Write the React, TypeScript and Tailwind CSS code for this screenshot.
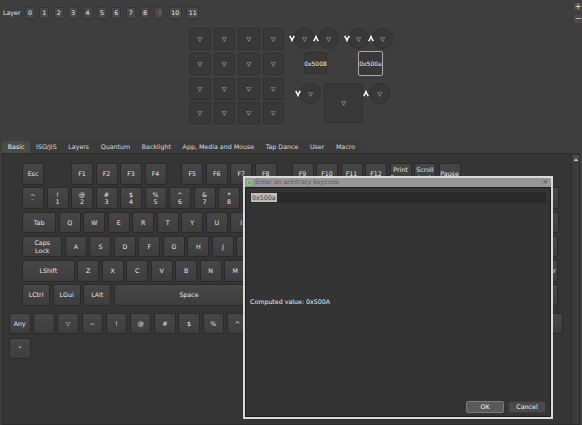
import React from "react";

function Tri() {
  return <span className="text-[6px] leading-none text-[#d4d4d4]">▽</span>;
}

function DownArrow({ className }: { className: string }) {
  return (
    <svg className={className} width="6" height="7" viewBox="0 0 6 7">
      <path d="M0.7 0.8 L3 5 L5.3 0.8" stroke="#ffffff" strokeWidth="1.5" fill="none" />
      <path d="M3 4.6 V6.6" stroke="#ffffff" strokeWidth="1.1" />
    </svg>
  );
}

function UpArrow({ className }: { className: string }) {
  return (
    <svg className={className} width="6" height="7" viewBox="0 0 6 7">
      <path d="M0.7 6.2 L3 2 L5.3 6.2" stroke="#ffffff" strokeWidth="1.5" fill="none" />
      <path d="M3 2.4 V0.4" stroke="#ffffff" strokeWidth="1.1" />
    </svg>
  );
}

function Circle({ className }: { className: string }) {
  return (
    <div className={`absolute w-[21px] h-[21px] rounded-full bg-[#383838] border border-[#303030] flex items-center justify-center ${className}`}>
      <Tri />
    </div>
  );
}

type KP = { w?: string; ml?: string; t?: string; b?: string; label?: string };

function Key({ w = "w-[22px]", ml = "", t, b, label }: KP) {
  return (
    <div
      className={`${w} ${ml} h-[21.5px] shrink-0 flex flex-col items-center justify-center rounded-[2px] border border-[#2a2a2a] bg-linear-to-b from-[#474747] to-[#3d3d3d] text-[#e6e6e6] leading-[7.5px] overflow-hidden`}
    >
      {t !== undefined ? (
        <>
          <span>{t}</span>
          <span>{b}</span>
        </>
      ) : (
        <span className="whitespace-pre-line text-center">{label}</span>
      )}
    </div>
  );
}

function SmallKey({ label }: { label: React.ReactNode }) {
  return (
    <div className="w-[21.5px] h-[21.5px] shrink-0 flex items-center justify-center rounded-[2px] border border-[#2a2a2a] bg-linear-to-b from-[#474747] to-[#3d3d3d] text-[#e6e6e6] leading-none">
      {label}
    </div>
  );
}

const tabs = ["Basic", "ISO/JIS", "Layers", "Quantum", "Backlight", "App, Media and Mouse", "Tap Dance", "User", "Macro"];

const row7: React.ReactNode[] = ["Any", "", <Tri key="t" />, "~", "!", "@", "#", "$", "%", "^", "&", "*", "(", ")", "_", "+", "{", "}", "<", ">", ":", "|", "?", '"'];

export default function App() {
  const layers = ["0", "1", "2", "3", "4", "5", "6", "7", "8", "9", "10", "11"];
  return (
    <div className="w-[582px] h-[425px] relative overflow-hidden bg-[#3e3e3e] text-[6.3px] text-[#e8e8e8] font-['DejaVu_Sans','Liberation_Sans',sans-serif] flex flex-col">
      {/* Top section */}
      <div className="h-[139px] shrink-0 relative">
        <div className="flex items-center pt-[7px] pl-[3px] gap-[4.4px]">
          <span>Layer</span>
          {layers.map((l) => (
            <div
              key={l}
              className={`h-[12px] min-w-[10px] px-[1.5px] flex items-center justify-center rounded-[1.5px] bg-[#484848] border border-[#353535] ${l === "9" ? "text-[#7a7a7a]" : "text-[#f0f0f0]"}`}
            >
              {l}
            </div>
          ))}
        </div>

        {/* zoom buttons */}
        <div className="absolute right-[0px] top-[3px] flex flex-col gap-[4px]">
          <div className="w-[8px] h-[8px] bg-[#4a4a4a] flex items-center justify-center text-[8px] leading-none text-[#e0e0e0]">+</div>
          <div className="w-[8px] h-[8px] bg-[#4a4a4a] flex items-center justify-center text-[8px] leading-none text-[#e0e0e0]">−</div>
        </div>

        {/* keyboard diagram */}
        <div className="absolute left-[189px] top-[28px] grid grid-cols-4 gap-x-[3px] gap-y-[2.8px]">
          {Array.from({ length: 16 }).map((_, i) => (
            <div key={i} className="w-[21.5px] h-[22px] rounded-[2px] bg-[#383838] border border-[#303030] flex items-center justify-center">
              <Tri />
            </div>
          ))}
        </div>

        <Circle className="left-[294px] top-[28px]" />
        <DownArrow className="absolute left-[289px] top-[35px]" />
        <Circle className="left-[318px] top-[28px]" />
        <UpArrow className="absolute left-[313px] top-[35px]" />
        <Circle className="left-[348px] top-[28px]" />
        <DownArrow className="absolute left-[344px] top-[35px]" />
        <Circle className="left-[372px] top-[28px]" />
        <UpArrow className="absolute left-[368px] top-[35px]" />

        <div className="absolute left-[304px] top-[52px] w-[23px] h-[22px] rounded-[2px] bg-[#383838] border border-[#303030] flex items-center justify-center text-[6px] text-[#f0f0f0]">
          0x5008
        </div>
        <div className="absolute left-[358px] top-[51px] w-[25px] h-[25px] rounded-[2px] bg-[#383838] border-[1.5px] border-[#a9a9a9] flex items-center justify-center text-[6px] text-[#f0f0f0]">
          0x500a
        </div>

        <Circle className="left-[300px] top-[83px]" />
        <DownArrow className="absolute left-[295px] top-[90px]" />
        <div className="absolute left-[324px] top-[83px] w-[39px] h-[40px] rounded-[2px] bg-[#383838] border border-[#303030] flex items-center justify-center">
          <Tri />
        </div>
        <Circle className="left-[369px] top-[83px]" />
        <UpArrow className="absolute left-[363px] top-[90px]" />
      </div>

      {/* Tabs */}
      <div className="flex-1 flex flex-col px-[2px] min-h-0">
        <div className="h-[14px] shrink-0 flex items-end">
          {tabs.map((t, i) => (
            <div
              key={t}
              className={`h-[12px] px-[5.8px] flex items-center rounded-t-[2px] ${i === 0 ? "bg-[#4a4a4a] text-[#f2f2f2]" : "bg-[#3b3b3b] text-[#dcdcdc]"}`}
            >
              {t}
            </div>
          ))}
        </div>
        <div className="flex-1 flex border border-[#2c2c2c] bg-[#353535] min-h-0">
          <div className="flex-1 flex flex-col pl-[6px] pt-[9px]">
            <div className="ml-[13px] flex flex-col gap-[2.8px]">
              <div className="flex gap-[2.5px]">
                <Key label="Esc" />
                <Key label="F1" ml="ml-[24.5px]" />
                <Key label="F2" />
                <Key label="F3" />
                <Key label="F4" />
                <Key label="F5" ml="ml-[12.25px]" />
                <Key label="F6" />
                <Key label="F7" />
                <Key label="F8" />
                <Key label="F9" ml="ml-[12.25px]" />
                <Key label="F10" />
                <Key label="F11" />
                <Key label="F12" />
                <Key label={"Print\nScreen"} />
                <Key label={"Scroll\nLock"} />
                <Key label="Pause" />
              </div>
              <div className="flex gap-[2.5px]">
                <Key t="~" b="`" />
                <Key t="!" b="1" />
                <Key t="@" b="2" />
                <Key t="#" b="3" />
                <Key t="$" b="4" />
                <Key t="%" b="5" />
                <Key t="^" b="6" />
                <Key t="&" b="7" />
                <Key t="*" b="8" />
                <Key t="(" b="9" />
                <Key t=")" b="0" />
                <Key t="_" b="-" />
                <Key t="+" b="=" />
                <Key label="Backspace" w="w-[46.5px]" />
                <Key label="Insert" />
                <Key label="Home" />
                <Key label={"Page\nUp"} />
                <Key label={"Num\nLock"} />
                <Key label="/" />
                <Key label="*" />
                <Key label="-" />
              </div>
              <div className="flex gap-[2.5px]">
                <Key label="Tab" w="w-[34.25px]" />
                {["Q", "W", "E", "R", "T", "Y", "U", "I", "O", "P"].map((k) => (
                  <Key key={k} label={k} />
                ))}
                <Key t="{" b="[" />
                <Key t="}" b="]" />
                <Key t="|" b="\" w="w-[34.25px]" />
                <Key label="Delete" />
                <Key label="End" />
                <Key label={"Page\nDown"} />
                <Key label="7" />
                <Key label="8" />
                <Key label="9" />
                <Key label="+" />
              </div>
              <div className="flex gap-[2.5px]">
                <Key label={"Caps\nLock"} w="w-[40.4px]" />
                {["A", "S", "D", "F", "G", "H", "J", "K", "L"].map((k) => (
                  <Key key={k} label={k} />
                ))}
                <Key t=":" b=";" />
                <Key t={'"'} b="'" />
                <Key label="Enter" w="w-[52.6px]" />
                <Key label="4" ml="ml-[73.5px]" />
                <Key label="5" />
                <Key label="6" />
                <Key label="" />
              </div>
              <div className="flex gap-[2.5px]">
                <Key label="LShift" w="w-[52.6px]" />
                {["Z", "X", "C", "V", "B", "N", "M"].map((k) => (
                  <Key key={k} label={k} />
                ))}
                <Key t="<" b="," />
                <Key t=">" b="." />
                <Key t="?" b="/" />
                <Key label="RShift" w="w-[64.9px]" />
                <Key label="↑" ml="ml-[24.5px]" />
                <Key label="1" ml="ml-[24.5px]" />
                <Key label="2" />
                <Key label="3" />
                <Key label="Enter" />
              </div>
              <div className="flex gap-[2.5px]">
                <Key label="LCtrl" w="w-[28.1px]" />
                <Key label="LGui" w="w-[28.1px]" />
                <Key label="LAlt" w="w-[28.1px]" />
                <Key label="Space" w="w-[150.6px]" />
                <Key label="RAlt" w="w-[28.1px]" />
                <Key label="RGui" w="w-[28.1px]" />
                <Key label="Menu" w="w-[28.1px]" />
                <Key label="RCtrl" w="w-[28.1px]" />
                <Key label="←" />
                <Key label="↓" />
                <Key label="→" />
                <Key label="0" w="w-[46.5px]" />
                <Key label="." />
                <Key label="-" />
              </div>
            </div>
            <div className="mt-[7px] w-[560px] flex flex-wrap gap-x-[2.7px] gap-y-[3.5px]">
              {row7.map((l, i) => (
                <SmallKey key={i} label={l} />
              ))}
            </div>
          </div>
          {/* scrollbar */}
          <div className="w-[8px] shrink-0 bg-[#3c3c3c] border-l border-[#2e2e2e] flex flex-col items-center pt-[2px]">
            <div className="w-[6px] h-[6px] bg-[#505050] flex items-center justify-center">
              <svg width="4" height="3" viewBox="0 0 4 3">
                <path d="M0 3 L2 0.5 L4 3 Z" fill="#cfcfcf" />
              </svg>
            </div>
          </div>
        </div>
      </div>

      {/* Dialog */}
      <div className="absolute left-[243px] top-[176px] w-[310px] h-[243px] border-2 border-[#dadada] flex flex-col bg-[#343434]">
        <div className="h-[9px] shrink-0 bg-[#979797] flex items-center pl-[2px] pr-[3px] gap-[3px] text-[#5e5e5e]">
          <div className="w-[5px] h-[5px] rounded-[1px] bg-[#58b84c] border border-[#8fd184]" />
          <span className="flex-1 leading-none">Enter an arbitrary keycode</span>
          <span className="text-[7px] leading-none text-[#4a4a4a]">×</span>
        </div>
        <div className="flex-1 flex flex-col border border-[#1c1c1c] px-[4px] pt-[4px] pb-[3px]">
          <div className="h-[11px] bg-[#2a2a2a] flex items-center pl-[1px]">
            <span className="bg-[#bdbdbd] text-[#3a3a3a] px-[1px] leading-[9px]">0x500a</span>
          </div>
          <div className="flex-1 flex items-center">
            <span className="text-[#f0f0f0]">Computed value: 0x500A</span>
          </div>
          <div className="flex justify-end gap-[4px]">
            <div className="w-[38px] h-[12px] rounded-[2px] bg-[#5a5a5a] border border-[#7a7a7a] flex items-center justify-center text-[#f2f2f2]">
              OK
            </div>
            <div className="w-[38px] h-[12px] rounded-[2px] bg-[#4a4a4a] border border-[#3a3a3a] flex items-center justify-center text-[#f2f2f2]">
              Cancel
            </div>
          </div>
        </div>
      </div>
    </div>
  );
}
